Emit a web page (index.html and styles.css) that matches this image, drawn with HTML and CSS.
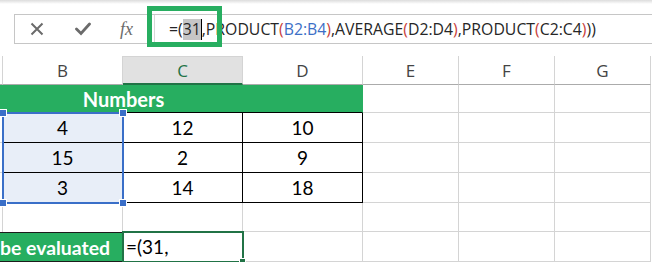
FILE: index.html
```html
<!DOCTYPE html>
<html lang="en">
<head>
  <meta charset="UTF-8">
  <title>Formula bar</title>
  <link rel="stylesheet" href="styles.css">
</head>
<body>
  <div class="topbar">
    <div class="fbar">
      <div class="fbar-tools">
        <svg class="tool" width="14" height="14" viewBox="0 0 14 14">
          <path d="M1.5 1.5 L12.5 12.5 M12.5 1.5 L1.5 12.5" stroke="#6b6b6b" stroke-width="2" fill="none"/>
        </svg>
        <svg class="tool" width="16" height="14" viewBox="0 0 16 14">
          <path d="M1.5 7 L6 11.5 L14.5 2" stroke="#6b6b6b" stroke-width="2.8" fill="none" stroke-linecap="round"/>
        </svg>
        <span class="fx">fx</span>
      </div>
      <div class="fbar-input">=(<span class="sel">31</span><span class="caret"></span>,PRODUCT<span class="p1">(</span><span class="ref">B2:B4</span><span class="p1">)</span>,AVERAGE<span class="p1">(</span>D2:D4<span class="p1">)</span>,PRODUCT<span class="p1">(</span>C2:C4<span class="p1">)</span>))</div>
    </div>
    <div class="callout"></div>
  </div>

  <div class="sheet">
    <div class="cell hd stub"></div>
    <div class="cell hd">B</div>
    <div class="cell hd active">C</div>
    <div class="cell hd">D</div>
    <div class="cell hd">E</div>
    <div class="cell hd">F</div>
    <div class="cell hd">G</div>

    <div class="cell title">Numbers</div>
    <div class="cell"></div>
    <div class="cell"></div>
    <div class="cell"></div>

    <div class="cell stub"></div>
    <div class="cell num picked">4</div>
    <div class="cell num">12</div>
    <div class="cell num">10</div>
    <div class="cell"></div>
    <div class="cell"></div>
    <div class="cell"></div>

    <div class="cell stub"></div>
    <div class="cell num picked">15</div>
    <div class="cell num">2</div>
    <div class="cell num">9</div>
    <div class="cell"></div>
    <div class="cell"></div>
    <div class="cell"></div>

    <div class="cell stub"></div>
    <div class="cell num picked">3</div>
    <div class="cell num">14</div>
    <div class="cell num">18</div>
    <div class="cell"></div>
    <div class="cell"></div>
    <div class="cell"></div>

    <div class="cell stub open"></div>
    <div class="cell open"></div>
    <div class="cell"></div>
    <div class="cell"></div>
    <div class="cell"></div>
    <div class="cell"></div>
    <div class="cell"></div>

    <div class="cell label">be evaluated</div>
    <div class="cell entry">=(31,</div>
    <div class="cell"></div>
    <div class="cell"></div>
    <div class="cell"></div>
    <div class="cell"></div>

    <div class="selection">
      <span class="handle tl"></span>
      <span class="handle tr"></span>
      <span class="handle bl"></span>
      <span class="handle br"></span>
    </div>
    <div class="cursor-cell"><span class="fill"></span></div>
  </div>
</body>
</html>
```

FILE: styles.css
```css
body {
  margin: 0;
  background-color: #ffffff;
  font-family: 'Open Sans', sans-serif;
  overflow: hidden;
}
.topbar {
  position: relative;
  height: 56px;
  padding-top: 14px;
  padding-left: 14px;
  box-sizing: border-box;
  background: linear-gradient(#dcdcdc, #ffffff 4px);
}
.fbar {
  display: flex;
  height: 30px;
  border: 1px solid #c6c6c6;
  border-right: none;
  box-sizing: border-box;
  background-color: #ffffff;
  overflow: hidden;
}
.fbar-tools {
  display: flex;
  align-items: center;
  flex: none;
  width: 139px;
}
.tool {
  margin-left: 15px;
}
.tool + .tool {
  margin-left: 31px;
}
.fx {
  margin-left: 29px;
  font-family: 'Liberation Serif', serif;
  font-style: italic;
  font-size: 18px;
  color: #6b6b6b;
}
.fbar-input {
  display: flex;
  align-items: center;
  padding-left: 14px;
  border-left: 1px solid #d8d8d8;
  font-size: 15.8px;
  color: #262626;
  white-space: nowrap;
}
.sel {
  background-color: #c6c6c6;
  line-height: 21px;
}
.caret {
  display: inline-block;
  width: 1px;
  height: 21px;
  background-color: #000000;
}
.p1 {
  color: #c8413c;
}
.ref {
  color: #3c6fc6;
}
.callout {
  position: absolute;
  left: 147px;
  top: 6px;
  width: 75px;
  height: 41px;
  border: 5px solid #27ae60;
  box-sizing: border-box;
}
.sheet {
  position: relative;
  display: grid;
  grid-template-columns: 3px 120px 120px 120px 96px 96px 96px;
  grid-template-rows: 29px 28px 30px 30px 30px 29px 30px;
  font-family: 'Lato', sans-serif;
}
.cell {
  display: flex;
  align-items: center;
  justify-content: center;
  box-sizing: border-box;
  border-right: 1px solid #d4d4d4;
  border-bottom: 1px solid #d4d4d4;
  font-size: 19px;
  color: #000000;
}
.hd {
  font-family: 'Open Sans', sans-serif;
  font-size: 17px;
  color: #444444;
  border-bottom-color: #ababab;
}
.hd.active {
  background-color: #e1e1e1;
  color: #217346;
  border-top: 1px solid #d4d4d4;
  border-bottom: 2px solid #217346;
}
.title {
  grid-column: span 4;
  background-color: #27ae60;
  color: #ffffff;
  font-weight: bold;
  font-size: 20px;
  padding-right: 115px;
  border-right-color: #27ae60;
  border-bottom-color: #000000;
}
.num {
  border-right-color: #000000;
  border-bottom-color: #000000;
}
.num.picked {
  background-color: #e8eef8;
}
.open {
  border-bottom: none;
}
.label {
  grid-column: span 2;
  justify-content: flex-end;
  padding-right: 12px;
  background-color: #27ae60;
  color: #ffffff;
  font-weight: bold;
  font-size: 19.4px;
  border-top: 1px solid #1c1c1c;
  border-right-color: #27ae60;
  border-bottom-color: #1c1c1c;
  white-space: nowrap;
}
.entry {
  justify-content: flex-start;
  padding-left: 3px;
}
.selection {
  position: absolute;
  left: 2px;
  top: 56px;
  width: 122px;
  height: 92px;
  border: 2px solid #3a6fc8;
  box-sizing: border-box;
}
.handle {
  position: absolute;
  width: 6px;
  height: 6px;
  background-color: #3a6fc8;
  border: 1px solid #ffffff;
}
.tl { left: -5px; top: -5px; }
.tr { right: -5px; top: -5px; }
.bl { left: -5px; bottom: -5px; }
.br { right: -5px; bottom: -5px; }
.cursor-cell {
  position: absolute;
  left: 122px;
  top: 175px;
  width: 122px;
  height: 32px;
  border: 2px solid #217346;
  box-sizing: border-box;
}
.fill {
  position: absolute;
  right: -4px;
  bottom: -4px;
  width: 5px;
  height: 5px;
  background-color: #217346;
  border: 1px solid #ffffff;
}
```
